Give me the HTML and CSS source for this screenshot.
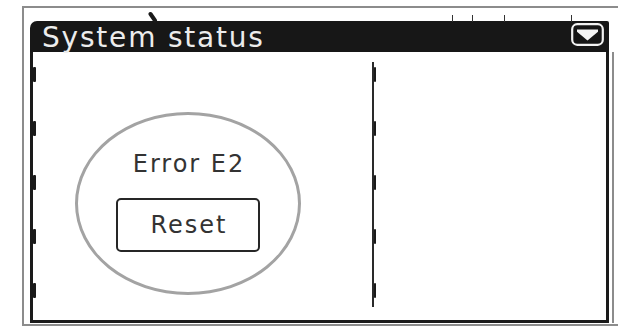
FILE: index.html
```html
<!DOCTYPE html>
<html lang="en">
<head>
<meta charset="utf-8">
<title>System status</title>
<link rel="stylesheet" href="styles.css">
</head>
<body>
<div class="device">
  <svg class="mark mark-blob" width="12" height="12" viewBox="0 0 12 12"><path d="M3.5 3 L8 9.5" stroke="#1a1a1a" stroke-width="4" stroke-linecap="round"/></svg>
  <span class="tick tick-1"></span>
  <span class="tick tick-2"></span>
  <span class="tick tick-3"></span>
  <span class="tick tick-4"></span>
  <div class="screen">
    <div class="titlebar">
      <span class="title">System status</span>
      <svg class="dropdown" width="33" height="23" viewBox="0 0 33 23">
        <rect x="1.2" y="1.2" width="30.6" height="20.6" rx="5" ry="5" fill="#151515" stroke="#f2f2f2" stroke-width="2.2"/>
        <path d="M6 6.5 H27 V8.8 L16.5 17.5 L6 8.8 Z" fill="#f4f4f4"/>
      </svg>
    </div>
    <div class="body">
      <div class="rail">
        <span class="bump"></span><span class="bump"></span><span class="bump"></span><span class="bump"></span><span class="bump"></span>
      </div>
      <div class="panel panel-left">
        <div class="ellipse">
          <div class="error">Error E2</div>
          <div class="reset">Reset</div>
        </div>
      </div>
      <div class="divider">
        <span class="bump"></span><span class="bump"></span><span class="bump"></span><span class="bump"></span><span class="bump"></span>
      </div>
      <div class="panel panel-right"></div>
    </div>
  </div>
</div>
</body>
</html>
```
FILE: styles.css
```css
* { box-sizing: border-box; }
html, body { margin: 0; padding: 0; background: #fff; }
body {
  width: 618px;
  height: 326px;
  overflow: hidden;
  font-family: "DejaVu Sans", "Liberation Sans", sans-serif;
}
.device {
  position: relative;
  margin: 6px 0 0 22px;
  height: 320px;
  border-left: 2px solid #8c8c8c;
  border-top: 2px solid #8c8c8c;
  border-bottom: 2px solid #8c8c8c;
  padding: 13px 0 1px 6px;
}
.mark { position: absolute; z-index: 2; }
.mark-blob { left: 123px; top: 3px; }
.tick {
  position: absolute;
  top: 7px;
  width: 1px;
  height: 7px;
  background: #333;
}
.tick-1 { left: 428px; }
.tick-2 { left: 448px; }
.tick-3 { left: 480px; }
.tick-4 { left: 547px; }
.screen {
  width: 579px;
  display: flex;
  flex-direction: column;
}
.titlebar {
  height: 31px;
  background: #171717;
  border-top-left-radius: 7px;
  border-top-right-radius: 2px;
  display: flex;
  align-items: flex-start;
  justify-content: space-between;
  padding: 0 5px 0 12px;
}
.title {
  color: #ececec;
  font-size: 28px;
  line-height: 29px;
  margin-top: 2px;
  letter-spacing: 1.8px;
  white-space: nowrap;
}
.dropdown { margin-top: 2px; }
.body {
  height: 271px;
  display: flex;
  border-left: 3px solid #1a1a1a;
  border-right: 3px solid #1a1a1a;
  border-bottom: 3px solid #1a1a1a;
  box-shadow: 3px 0 0 0 #fff, 5px 0 0 0 #8c8c8c;
}
.rail {
  width: 3px;
  display: flex;
  flex-direction: column;
  gap: 39px;
  padding-top: 15px;
}
.bump {
  display: block;
  width: 3px;
  height: 15px;
  background: #1a1a1a;
  border-radius: 1px;
}
.panel-left {
  width: 336px;
  padding: 60px 0 0 39px;
}
.ellipse {
  width: 226px;
  height: 183px;
  border: 3px solid #a3a3a3;
  border-radius: 50%;
  display: flex;
  flex-direction: column;
  align-items: center;
  padding-top: 35px;
}
.error {
  color: #333;
  font-size: 24px;
  line-height: 28px;
  letter-spacing: 2px;
  margin-right: -2px;
}
.reset {
  margin-top: 20px;
  width: 144px;
  height: 54px;
  border: 2px solid #262626;
  border-radius: 5px;
  color: #333;
  font-size: 24px;
  letter-spacing: 2px;
  display: flex;
  align-items: center;
  justify-content: center;
  padding-left: 2px;
}
.divider {
  width: 4px;
  margin-top: 10px;
  height: 245px;
  border-left: 2px solid #2a2a2a;
  display: flex;
  flex-direction: column;
  gap: 39px;
  padding-top: 5px;
}
.divider .bump { width: 2px; }
.panel-right { flex: 1; }
```
